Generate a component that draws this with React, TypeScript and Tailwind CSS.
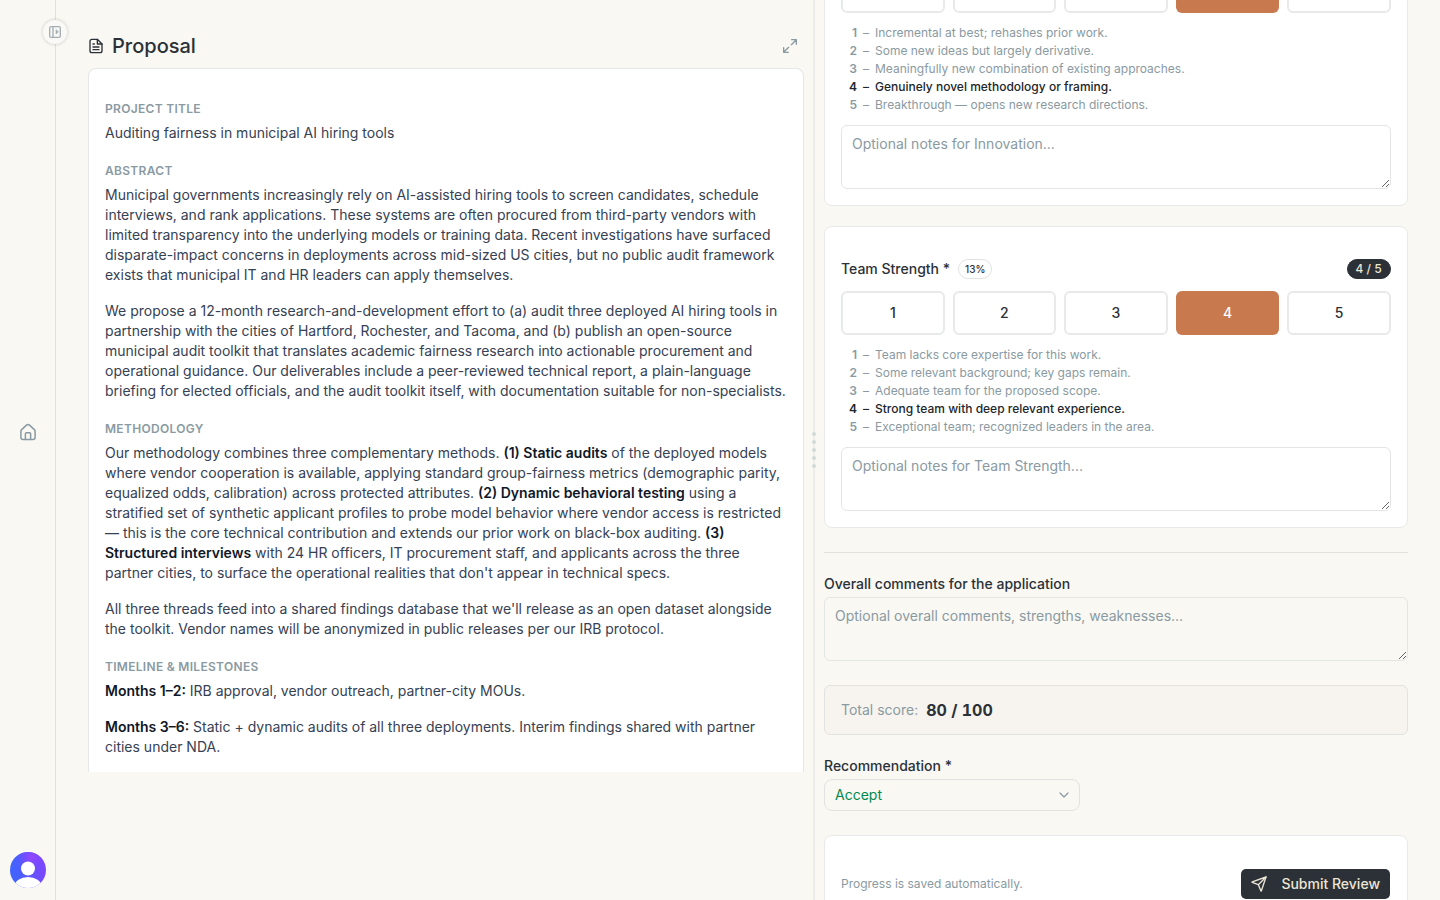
import type { ReactNode } from "react";

const font = "font-['Inter',sans-serif]";

function Icon({ className, children, width = 1.5 }: { className?: string; children: ReactNode; width?: number }) {
  return (
    <svg
      viewBox="0 0 24 24"
      fill="none"
      stroke="currentColor"
      strokeWidth={width}
      strokeLinecap="round"
      strokeLinejoin="round"
      className={className}
      aria-hidden="true"
    >
      {children}
    </svg>
  );
}

function Avatar() {
  return (
    <svg viewBox="0 0 36 36" className="size-9" aria-hidden="true">
      <defs>
        <linearGradient id="avatarBase" x1="0" y1="0.6" x2="1" y2="0.4">
          <stop offset="0.15" stopColor="#4362ff" />
          <stop offset="0.9" stopColor="#7a48ff" />
        </linearGradient>
        <radialGradient id="avatarGlow" cx="0.6" cy="0.15" r="0.4">
          <stop offset="0" stopColor="#9747ff" />
          <stop offset="1" stopColor="#7a48ff" stopOpacity="0" />
        </radialGradient>
        <clipPath id="avatarClip">
          <circle cx="18" cy="18" r="18" />
        </clipPath>
      </defs>
      <g clipPath="url(#avatarClip)">
        <rect width="36" height="36" fill="url(#avatarBase)" />
        <rect width="36" height="36" fill="url(#avatarGlow)" />
        <circle cx="18" cy="16.5" r="7" fill="#fff" />
        <ellipse cx="18" cy="34" rx="13.5" ry="9" fill="#fff" />
      </g>
    </svg>
  );
}

function Sidebar() {
  return (
    <nav className="relative flex w-14 shrink-0 flex-col items-center justify-between border-r border-[#dfe1df] py-3">
      <button
        type="button"
        aria-label="Expand sidebar"
        className="absolute top-5 -right-3 flex size-6 items-center justify-center rounded-full bg-[#faf9f5] text-[#a3afb5] shadow-[0_0_3px_1px_rgba(43,49,55,0.14)]"
      >
        <Icon className="size-4" width={2}>
          <rect x="4" y="4" width="16" height="16" rx="2" />
          <path d="M9 4v16" />
          <path d="M13.5 9v6l3.5-3z" fill="currentColor" strokeWidth={1} />
        </Icon>
      </button>
      <span />
      <a href="#home" aria-label="Home" className="text-[#8a9aa2]">
        <Icon className="size-[18px]" width={2}>
          <path d="M2.500 11a3 3 0 0 1 1-2.200l6.500-6a3 3 0 0 1 4 0l6.500 6a3 3 0 0 1 1 2.200v8a3 3 0 0 1-3 3h-13a3 3 0 0 1-3-3z" />
          <path d="M8.500 22v-7.500a1.500 1.500 0 0 1 1.500-1.500h4a1.500 1.500 0 0 1 1.500 1.500V22" />
        </Icon>
      </a>
      <button type="button" aria-label="Account" className="rounded-full">
        <Avatar />
      </button>
    </nav>
  );
}

function Section({ title, children }: { title: string; children: ReactNode }) {
  return (
    <section className="flex flex-col gap-1.5">
      <h2 className="text-xs font-semibold tracking-wide text-[#8a9aa2] uppercase">{title}</h2>
      <div className="flex flex-col gap-4 text-sm text-[#364153]">{children}</div>
    </section>
  );
}

function B({ children }: { children: ReactNode }) {
  return <strong className="font-semibold text-[#101828]">{children}</strong>;
}

function Proposal() {
  return (
    <div className="flex flex-col gap-2 pt-8 pr-[9px]">
      <header className="flex items-center justify-between pr-1.5">
        <h1 className="flex items-center gap-2 text-xl font-medium text-[#2b3137]">
          <Icon className="size-4" width={2}>
            <path d="M3 5a3 3 0 0 1 3-3h8l7 7v10a3 3 0 0 1-3 3H6a3 3 0 0 1-3-3z" />
            <path d="M14 2v7h7M7.500 9h2M7.500 13.500h9M7.500 17.500h9" />
          </Icon>
          Proposal
        </h1>
        <button type="button" aria-label="Expand proposal" className="text-[#8a9aa2]">
          <Icon className="size-4" width={2}>
            <path d="M14.500 2.500h7v7M21.500 2.500 14 10M2.500 14.500v7h7M2.500 21.500 10 14" />
          </Icon>
        </button>
      </header>
      <div className="h-[calc(100vh-196px)] overflow-hidden">
        <article className="flex min-h-full flex-col gap-5 rounded-t-lg border border-b-0 border-[#e4e7e8] bg-white px-4 pt-8 pb-4">
          <Section title="Project title">
            <p>Auditing fairness in municipal AI hiring tools</p>
          </Section>
          <Section title="Abstract">
            <p>
              Municipal governments increasingly rely on AI-assisted hiring tools to screen candidates, schedule
              interviews, and rank applications. These systems are often procured from third-party vendors with limited
              transparency into the underlying models or training data. Recent investigations have surfaced
              disparate-impact concerns in deployments across mid-sized US cities, but no public audit framework exists
              that municipal IT and HR leaders can apply themselves.
            </p>
            <p>
              We propose a 12-month research-and-development effort to (a) audit three deployed AI hiring tools in
              partnership with the cities of Hartford, Rochester, and Tacoma, and (b) publish an open-source municipal
              audit toolkit that translates academic fairness research into actionable procurement and operational
              guidance. Our deliverables include a peer-reviewed technical report, a plain-language briefing for elected
              officials, and the audit toolkit itself, with documentation suitable for non-specialists.
            </p>
          </Section>
          <Section title="Methodology">
            <p>
              Our methodology combines three complementary methods. <B>(1) Static audits</B> of the deployed models
              where vendor cooperation is available, applying standard group-fairness metrics (demographic parity,
              equalized odds, calibration) across protected attributes. <B>(2) Dynamic behavioral testing</B> using a
              stratified set of synthetic applicant profiles to probe model behavior where vendor access is restricted —
              this is the core technical contribution and extends our prior work on black-box auditing.{" "}
              <B>(3) Structured interviews</B> with 24 HR officers, IT procurement staff, and applicants across the
              three partner cities, to surface the operational realities that don't appear in technical specs.
            </p>
            <p>
              All three threads feed into a shared findings database that we'll release as an open dataset alongside the
              toolkit. Vendor names will be anonymized in public releases per our IRB protocol.
            </p>
          </Section>
          <Section title="Timeline & milestones">
            <p>
              <B>Months 1–2:</B> IRB approval, vendor outreach, partner-city MOUs.
            </p>
            <p>
              <B>Months 3–6:</B> Static + dynamic audits of all three deployments. Interim findings shared with partner
              cities under NDA.
            </p>
          </Section>
        </article>
      </div>
    </div>
  );
}

function Splitter() {
  return (
    <div className="flex flex-col items-center justify-center gap-1 bg-[#edecea]">
      {[0, 1, 2, 3, 4].map((n) => (
        <span key={n} className="size-1 shrink-0 rounded-full bg-[#d3d8d9]" />
      ))}
    </div>
  );
}

const scores = [1, 2, 3, 4, 5];
const field =
  "block h-16 w-full resize-y border border-[#e4e6e5] bg-transparent px-2.5 py-2 text-sm text-[#2b3137] placeholder:text-[#8a9aa2]";

function Criterion({ id, name, weight, score, levels }: {
  id: string;
  name: string;
  weight: string;
  score: number;
  levels: string[];
}) {
  return (
    <section className="flex flex-col gap-3 rounded-lg border border-[#e8eaea] bg-white px-4 pt-8 pb-4">
      <div className="flex h-5 items-center justify-between">
        <div className="flex items-center gap-2">
          <label htmlFor={id} className="text-sm font-medium">
            {name} *
          </label>
          <span className="flex h-5 items-center rounded-full border border-[#e1e3e3] px-1.5 text-[10px] font-medium">
            {weight}
          </span>
        </div>
        <span className="flex h-5 items-center rounded-full border border-[#2b3137] bg-[#2b3137] px-2 text-xs font-medium text-[#ebe5d6] tabular-nums">
          {score} / 5
        </span>
      </div>
      <div className="grid grid-cols-5 gap-2">
        {scores.map((n) => (
          <button
            key={n}
            type="button"
            aria-pressed={n === score}
            className={
              n === score
                ? "h-11 rounded-md bg-[#c8794d] text-sm font-medium text-white"
                : "h-11 rounded-md border-2 border-[#e8e9e9] text-sm font-medium"
            }
          >
            {n}
          </button>
        ))}
      </div>
      <ul className="flex flex-col gap-0.5 text-xs">
        {levels.map((text, i) => (
          <li
            key={text}
            className={i + 1 === score ? "flex gap-1.5 font-medium text-[#20262b]" : "flex gap-1.5 text-[#8a9aa2]"}
          >
            <span className="w-4 text-right font-semibold">{i + 1}</span>
            <span>–</span>
            <span>{text}</span>
          </li>
        ))}
      </ul>
      <textarea id={id} className={`${field} rounded-md`} placeholder={`Optional notes for ${name}...`} />
    </section>
  );
}

function Review() {
  return (
    <div className="overflow-hidden pr-8 pl-[9px] text-[#2b3137]">
      <div className="-mt-24 flex flex-col gap-6">
        <div className="flex flex-col gap-5">
          <Criterion
            id="innovation"
            name="Innovation"
            weight="20%"
            score={4}
            levels={[
              "Incremental at best; rehashes prior work.",
              "Some new ideas but largely derivative.",
              "Meaningfully new combination of existing approaches.",
              "Genuinely novel methodology or framing.",
              "Breakthrough — opens new research directions.",
            ]}
          />
          <Criterion
            id="team"
            name="Team Strength"
            weight="13%"
            score={4}
            levels={[
              "Team lacks core expertise for this work.",
              "Some relevant background; key gaps remain.",
              "Adequate team for the proposed scope.",
              "Strong team with deep relevant experience.",
              "Exceptional team; recognized leaders in the area.",
            ]}
          />
        </div>
        <hr className="border-[#e2e3e0]" />
        <div className="flex flex-col gap-1.5">
          <label htmlFor="overall" className="text-sm leading-[14px] font-medium">
            Overall comments for the application
          </label>
          <textarea
            id="overall"
            className={`${field} rounded-md`}
            placeholder="Optional overall comments, strengths, weaknesses..."
          />
        </div>
        <div className="flex items-center gap-2 rounded-md border border-[#e2e3e0] bg-[#f7f4ef] px-4 py-3">
          <span className="text-sm text-[#8a9aa2]">Total score:</span>
          <span className="text-base font-bold tabular-nums">80 / 100</span>
        </div>
        <div className="flex flex-col gap-1.5">
          <label htmlFor="recommendation" className="text-sm leading-[14px] font-medium">
            Recommendation *
          </label>
          <div className="grid w-64 items-center">
            <select
              id="recommendation"
              defaultValue="Accept"
              className="col-start-1 row-start-1 h-8 w-full appearance-none rounded-lg border border-[#e2e3e0] bg-transparent px-2.5 text-sm text-[#008a50]"
            >
              <option>Accept</option>
              <option>Revise</option>
              <option>Decline</option>
            </select>
            <Icon
              className="pointer-events-none col-start-1 row-start-1 mr-2 size-4 justify-self-end text-[#8a9aa2]"
              width={1.8}
            >
              <path d="m6 9 6 6 6-6" />
            </Icon>
          </div>
        </div>
        <div className="flex items-center justify-between rounded-lg border border-[#e8eaea] bg-white px-4 pt-8 pb-4">
          <span className="text-xs text-[#8a9aa2]">Progress is saved automatically.</span>
          <button
            type="button"
            className="flex h-8 items-center gap-3.5 rounded-md border border-transparent bg-[#2b3137] bg-clip-padding px-2.5 text-sm font-medium text-[#ebe5d6]"
          >
            <Icon className="size-4" width={2}>
              <path d="M22.500 1.500 1.800 8.700a.4.4 0 0 0 0 .8L11 13l3.800 9.200a.4.4 0 0 0 .8 0z" />
              <path d="M22.500 1.500 11 13" />
            </Icon>
            Submit Review
          </button>
        </div>
      </div>
    </div>
  );
}

export default function App() {
  return (
    <div className={`${font} flex h-screen overflow-hidden bg-[#f9f8f3]`}>
      <Sidebar />
      <main className="grid min-w-0 flex-1 grid-cols-[minmax(0,725fr)_2px_minmax(0,625fr)] pl-8">
        <Proposal />
        <Splitter />
        <Review />
      </main>
    </div>
  );
}
